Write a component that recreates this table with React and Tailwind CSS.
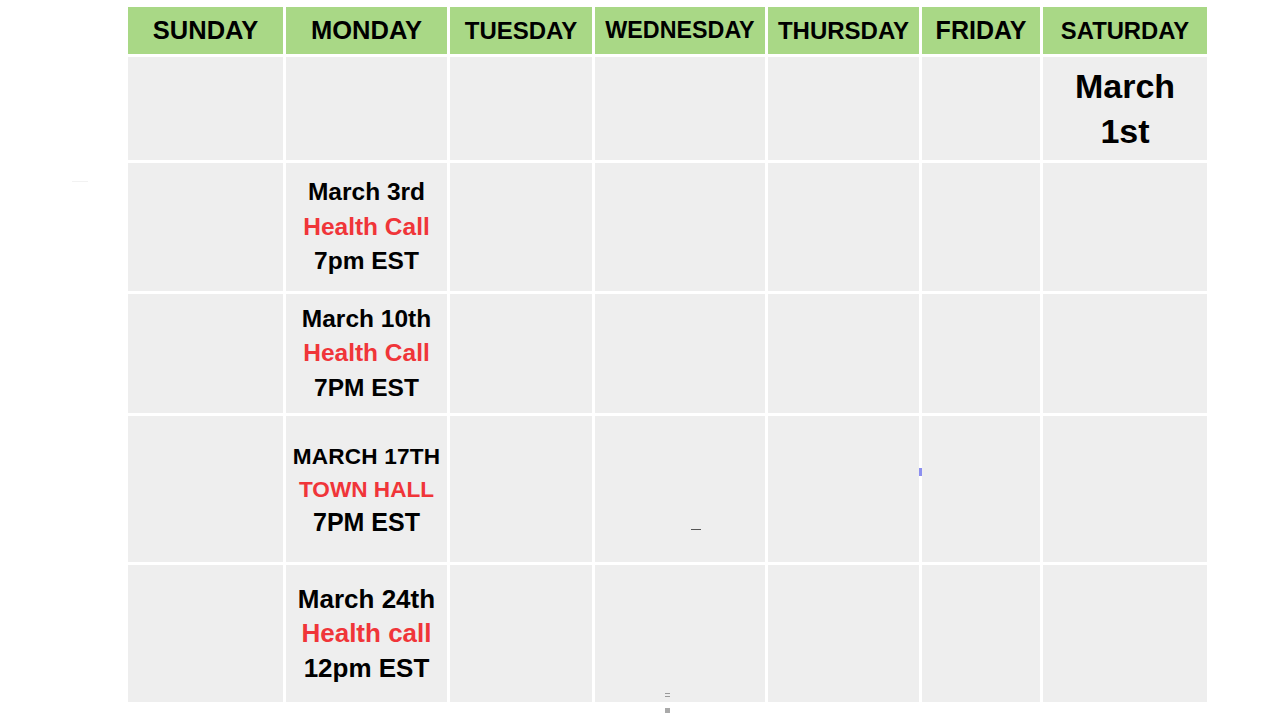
const days = [
  { name: "SUNDAY", size: "text-[25.5px]" },
  { name: "MONDAY", size: "text-[25.5px]" },
  { name: "TUESDAY", size: "text-[24px]" },
  { name: "WEDNESDAY", size: "text-[23.3px]" },
  { name: "THURSDAY", size: "text-[24px]" },
  { name: "FRIDAY", size: "text-[25px]" },
  { name: "SATURDAY", size: "text-[23.8px]" },
];

const rowHeights = "grid-rows-[47px_103px_128px_119px_146px_137px]";

function Event({ date, title, time, size, leading }) {
  return (
    <div className={`flex flex-col items-center font-bold ${size} ${leading}`}>
      <span className="text-black">{date}</span>
      <span className="text-[#f03539]">{title}</span>
      <span className="text-black">{time}</span>
    </div>
  );
}

function Cell({ children }) {
  return (
    <div className="bg-[#eeeeee] flex items-center justify-center">
      {children}
    </div>
  );
}

export default function App() {
  const mondays = [
    { date: "March 3rd", title: "Health Call", time: "7pm EST", size: "text-[24.5px]", leading: "leading-[34.7px]" },
    { date: "March 10th", title: "Health Call", time: "7PM EST", size: "text-[24.5px]", leading: "leading-[34.5px]" },
    null,
    { date: "March 24th", title: "Health call", time: "12pm EST", size: "text-[26px]", leading: "leading-[34.5px]" },
  ];

  return (
    <div
      className="relative w-[1280px] h-[720px] bg-white overflow-hidden"
      style={{ fontFamily: '"Liberation Sans", Arial, sans-serif' }}
    >
      <div className="pl-[128px] pt-[7px]">
        <div
          className={`grid grid-cols-[155px_161px_142px_170px_151px_118px_164px] ${rowHeights} gap-[3px]`}
        >
          {days.map((d) => (
            <div
              key={d.name}
              className={`bg-[#a9d886] flex items-center justify-center font-bold text-black ${d.size}`}
            >
              {d.name}
            </div>
          ))}

          {/* first week */}
          {[0, 1, 2, 3, 4, 5].map((i) => (
            <Cell key={`w1-${i}`} />
          ))}
          <Cell>
            <div className="flex flex-col items-center font-bold text-[34px] leading-[45px] text-black">
              <span>March</span>
              <span>1st</span>
            </div>
          </Cell>

          {mondays.map((m, w) => (
            <>
              <Cell key={`s-${w}`} />
              <Cell key={`m-${w}`}>
                {m ? (
                  <Event {...m} />
                ) : (
                  <div className="flex flex-col items-center font-bold leading-[32.5px] pt-[2px]">
                    <span className="text-[22.6px] tracking-[0.2px] text-black">MARCH 17TH</span>
                    <span className="text-[22.6px] text-[#f03539]">TOWN HALL</span>
                    <span className="text-[25px] text-black">7PM EST</span>
                  </div>
                )}
              </Cell>
              {[0, 1, 2, 3, 4].map((i) => (
                <Cell key={`r-${w}-${i}`} />
              ))}
            </>
          ))}
        </div>
      </div>

      {/* stray marks over the grid */}
      <div className="absolute left-[691px] top-[529px] w-[10px] h-[1px] bg-[#555]" />
      <div className="absolute left-[919px] top-[468px] w-[3px] h-[8px] bg-[#8c8ff0]" />
      <div className="absolute left-[665px] top-[693px] w-[5px] h-[4px] border-y border-[#999]" />
      <div className="absolute left-[665px] top-[708px] w-[5px] h-[5px] bg-[#aaa]" />
      <div className="absolute left-[72px] top-[181px] w-[16px] h-[1px] bg-[#f2f2f2]" />
    </div>
  );
}
